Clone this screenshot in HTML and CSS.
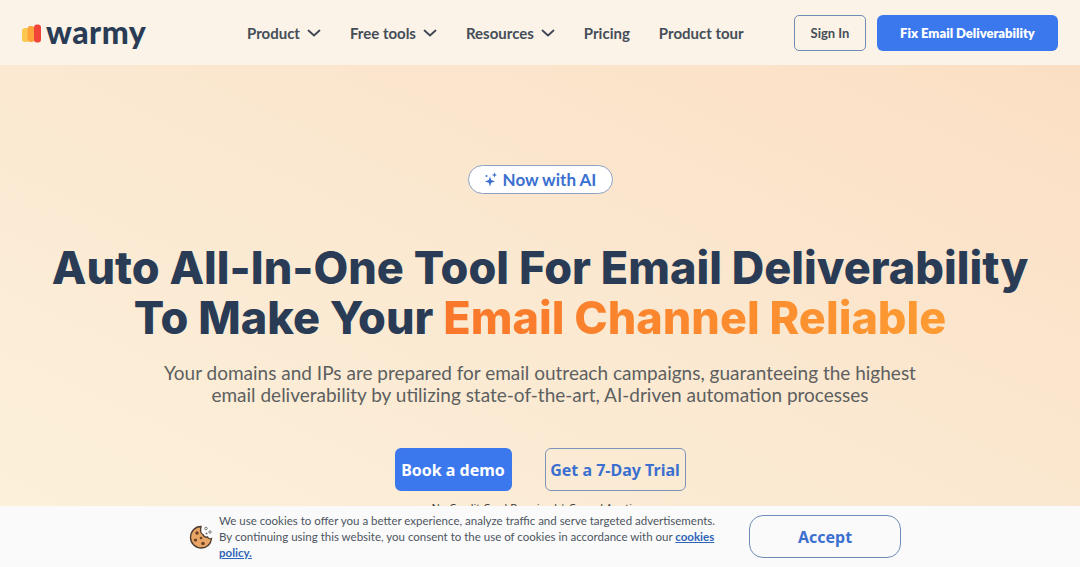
FILE: index.html
```html
<!DOCTYPE html>
<html lang="en">
<head>
<meta charset="utf-8">
<title>Warmy</title>
<link rel="stylesheet" href="styles.css">
</head>
<body>
<header class="header">
  <a class="logo" href="#">
    <svg class="logo-mark" width="20" height="20" viewBox="0 0 20 20"><rect x="0" y="5" width="7" height="14" rx="3" fill="#fdc84f"/><rect x="5.500" y="3" width="7" height="16" rx="3" fill="#fda43a"/><rect x="12" y="1.500" width="7" height="18" rx="3" fill="#f2453a"/></svg>
    <span class="logo-text">warmy</span>
  </a>
  <nav class="nav">
    <a class="nav-item" href="#">Product <svg class="chev" width="14" height="8" viewBox="0 0 14 8"><path d="M1.500 1.500 7 6.500l5.500-5" fill="none" stroke="#3d4652" stroke-width="1.800" stroke-linecap="round" stroke-linejoin="round"/></svg></a>
    <a class="nav-item" href="#">Free tools <svg class="chev" width="14" height="8" viewBox="0 0 14 8"><path d="M1.500 1.500 7 6.500l5.500-5" fill="none" stroke="#3d4652" stroke-width="1.800" stroke-linecap="round" stroke-linejoin="round"/></svg></a>
    <a class="nav-item" href="#">Resources <svg class="chev" width="14" height="8" viewBox="0 0 14 8"><path d="M1.500 1.500 7 6.500l5.500-5" fill="none" stroke="#3d4652" stroke-width="1.800" stroke-linecap="round" stroke-linejoin="round"/></svg></a>
    <a class="nav-item" href="#">Pricing</a>
    <a class="nav-item" href="#">Product tour</a>
  </nav>
  <div class="header-actions">
    <a class="btn-signin" href="#">Sign In</a>
    <a class="btn-fix" href="#">Fix Email Deliverability</a>
  </div>
</header>
<main class="hero">
  <div class="badge">
    <svg width="14" height="15" viewBox="0 0 14 15"><path d="M6 4.500 7.200 8 11 9.500 7.200 10.800 6 14.500 4.800 10.800 1 9.500 4.800 8Z" fill="#3b6fd0"/><path d="M10.500 0.500 11.200 2.300 13 3 11.200 3.700 10.500 5.500 9.800 3.700 8 3 9.800 2.300Z" fill="#3b6fd0"/><circle cx="2.500" cy="4" r="1" fill="#3b6fd0"/></svg>
    <span>Now with AI</span>
  </div>
  <h1 class="title">Auto All-In-One Tool For Email Deliverability<br>To Make Your <span class="accent">Email Channel Reliable</span></h1>
  <p class="lead">Your domains and IPs are prepared for email outreach campaigns, guaranteeing the highest<br>email deliverability by utilizing state-of-the-art, AI-driven automation processes</p>
  <div class="cta">
    <a class="btn-demo" href="#">Book a demo</a>
    <a class="btn-trial" href="#">Get a 7-Day Trial</a>
  </div>
  <p class="note">No Credit Card Required | Cancel Anytime</p>
</main>
<aside class="cookie">
  <svg class="cookie-icon" width="24" height="24" viewBox="0 0 24 24">
    <path d="M12 1.500C6 1.500 1.500 6.500 1.500 12.500S6.500 23 12.500 23c5.500 0 9.500-4 10-9.500-1.500.5-3.500 0-4-1.500-2 .5-4-.5-4.500-2.500C12.500 9 11 6.500 12 1.500Z" fill="#e8a566" stroke="#4a3a30" stroke-width="1.300"/>
    <circle cx="8" cy="8" r="1.700" fill="#6b3f22"/><circle cx="6.500" cy="15" r="1.600" fill="#6b3f22"/><circle cx="12" cy="13" r="1.300" fill="#6b3f22"/><circle cx="14" cy="18.500" r="1.700" fill="#6b3f22"/>
    <circle cx="17" cy="3.500" r="1.300" fill="none" stroke="#6d6d6d" stroke-width=".9"/><circle cx="21" cy="7" r="1.200" fill="none" stroke="#6d6d6d" stroke-width=".9"/><circle cx="17.500" cy="8.500" r="1" fill="#6d6d6d"/>
  </svg>
  <p class="cookie-text">We use cookies to offer you a better experience, analyze traffic and serve targeted advertisements.<br>By continuing using this website, you consent to the use of cookies in accordance with our <a class="cookie-link" href="#">cookies policy.</a></p>
  <a class="btn-accept" href="#">Accept</a>
</aside>
</body>
</html>
```
FILE: styles.css
```css
* { box-sizing: border-box; }
html, body { margin: 0; height: 100%; overflow: hidden; }
body { font-family: "Noto Sans", sans-serif; color: #3d4652; width: 1080px; height: 567px; position: relative; }
a { text-decoration: none; color: inherit; }
.header { height: 65px; background: #fbf3e7; display: flex; align-items: center; padding: 0 22px; }
.logo { display: flex; align-items: center; gap: 4px; width: 225px; }
.logo-text { font-family: "Lato", sans-serif; font-weight: 900; font-size: 32px; color: #2a3c55; line-height: 1; letter-spacing: 0.5px; margin-top: -2px; }
.nav { display: flex; gap: 29px; font-family: "Lato", sans-serif; font-weight: 700; font-size: 15px; color: #454d58; }
.nav-item { display: flex; align-items: center; gap: 7px; }
.header-actions { margin-left: auto; display: flex; gap: 11px; margin-right: 0; }
.btn-signin { width: 72px; height: 36px; border: 1px solid #6f8cb5; border-radius: 5px; display: flex; align-items: center; justify-content: center; font-family: "Lato", sans-serif; font-weight: 700; font-size: 13px; color: #454d58; }
.btn-fix { width: 181px; height: 36px; border-radius: 6px; background: #3b78ee; color: #fff; display: flex; align-items: center; justify-content: center; font-family: "Lato", sans-serif; font-weight: 800; font-size: 13px; }
.hero { height: 502px; background: linear-gradient(205deg, #fbdfc4 0%, #fbe8d0 45%, #fcf1dc 100%); display: flex; flex-direction: column; align-items: center; padding-top: 100px; }
.badge { width: 145px; height: 29px; border: 1px solid #8ea2c4; border-radius: 15px; background: #fff; display: flex; align-items: center; justify-content: center; gap: 5px; font-family: "Lato", sans-serif; font-weight: 700; font-size: 17px; color: #3b6fd0; }
.title { margin: 49px 0 0; text-align: center; font-family: "Inter", sans-serif; font-weight: 800; font-size: 45px; line-height: 50px; color: #2a3c55; letter-spacing: 0; }
.accent { color: #fb8a2e; background: linear-gradient(90deg, #f9772b, #fd9b32); -webkit-background-clip: text; background-clip: text; -webkit-text-fill-color: transparent; }
.lead { margin: 19px 0 0; text-align: center; font-family: "Lato", sans-serif; font-size: 19px; line-height: 22px; color: #5d5f60; }
.cta { display: flex; gap: 33px; margin-top: 42px; }
.btn-demo { width: 117px; height: 43px; border-radius: 6px; background: #3b78ee; color: #fff; display: flex; align-items: center; justify-content: center; font-weight: 700; font-size: 16px; }
.btn-trial { width: 141px; height: 43px; border-radius: 6px; border: 1px solid #7d94b8; color: #3b6fd0; display: flex; align-items: center; justify-content: center; font-weight: 700; font-size: 16px; }
.note { margin: 10px 0 0; font-size: 11px; line-height: 14px; color: #3d3d3d; }
.cookie { position: absolute; left: 0; right: 0; bottom: 0; height: 61px; background: #fafafa; display: flex; align-items: center; padding-left: 189px; }
.cookie-icon { flex: none; margin-right: 6px; }
.cookie-text { margin: 0; font-family: "Lato", sans-serif; font-size: 11.500px; line-height: 16px; color: #4d5560; width: 519px; }
.cookie-link { color: #2f64b8; font-weight: 700; text-decoration: underline; }
.btn-accept { width: 152px; height: 43px; margin-left: 11px; border: 1px solid #6f8cb5; border-radius: 14px; color: #3b6fd0; display: flex; align-items: center; justify-content: center; font-weight: 700; font-size: 16px; }
```
